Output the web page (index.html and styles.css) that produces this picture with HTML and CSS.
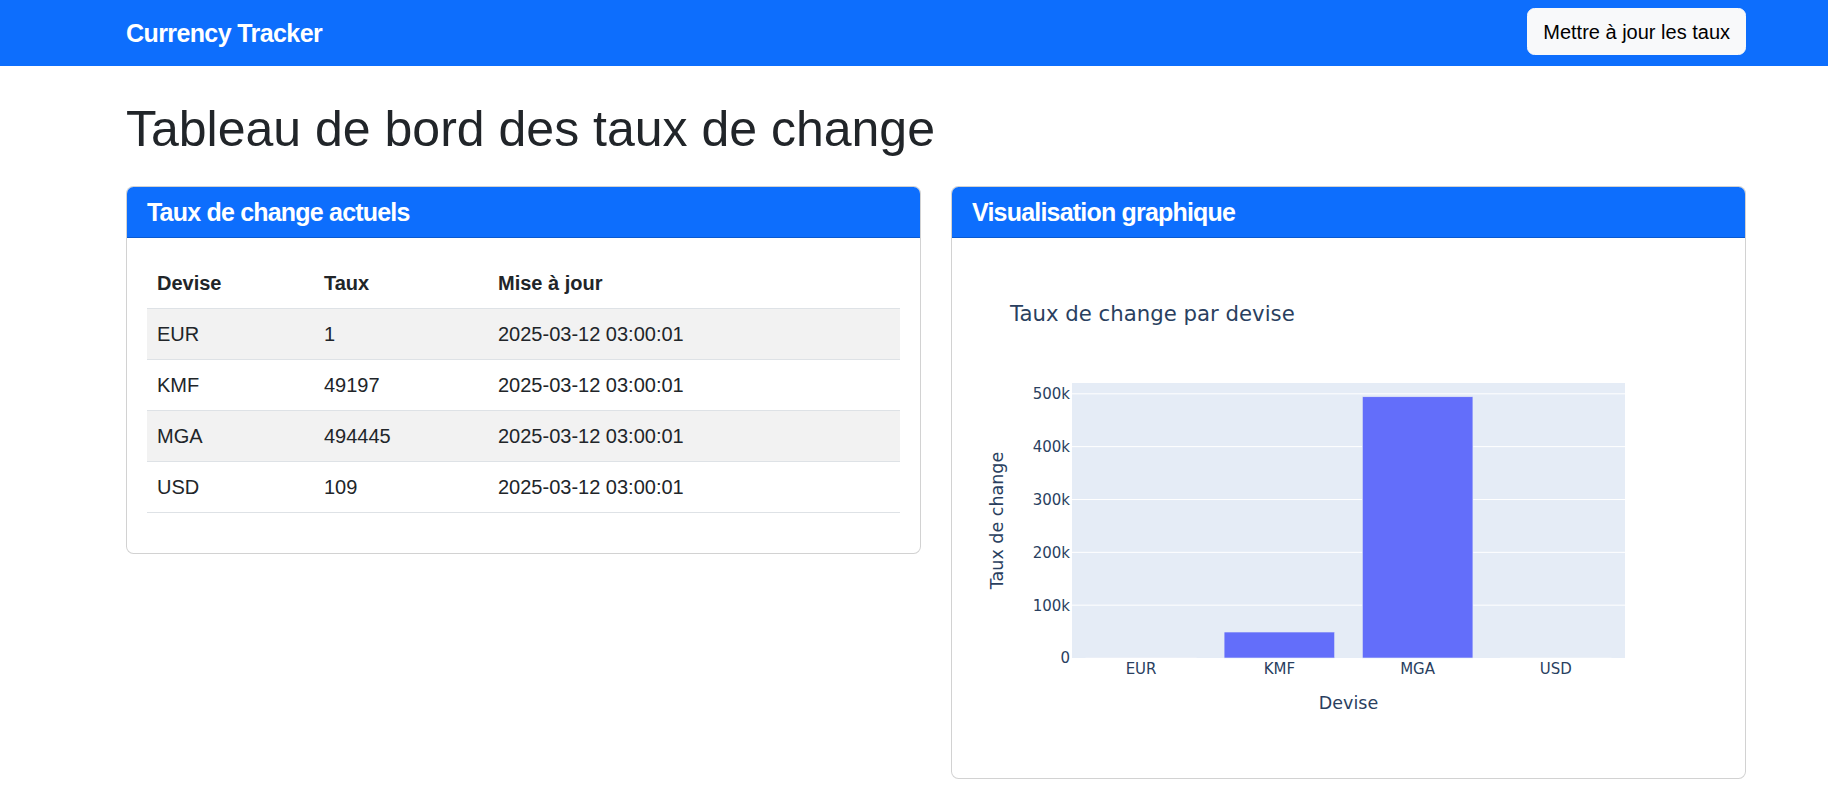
FILE: index.html
```html
<!DOCTYPE html>
<html lang="fr">
<head>
<meta charset="utf-8">
<title>Currency Tracker</title>
<link rel="stylesheet" href="styles.css">
</head>
<body>
<nav class="navbar">
  <div class="navbar-inner">
    <a class="brand" href="#">Currency Tracker</a>
    <button class="btn-light" type="button">Mettre à jour les taux</button>
  </div>
</nav>

<main class="container">
  <h1 class="page-title">Tableau de bord des taux de change</h1>

  <div class="cards">
    <section class="card">
      <h5 class="card-header">Taux de change actuels</h5>
      <div class="card-body">
        <table class="rates">
          <colgroup>
            <col class="col-devise">
            <col class="col-taux">
            <col>
          </colgroup>
          <thead>
            <tr><th>Devise</th><th>Taux</th><th>Mise à jour</th></tr>
          </thead>
          <tbody>
            <tr class="striped"><td>EUR</td><td>1</td><td>2025-03-12 03:00:01</td></tr>
            <tr><td>KMF</td><td>49197</td><td>2025-03-12 03:00:01</td></tr>
            <tr class="striped"><td>MGA</td><td>494445</td><td>2025-03-12 03:00:01</td></tr>
            <tr><td>USD</td><td>109</td><td>2025-03-12 03:00:01</td></tr>
          </tbody>
        </table>
      </div>
    </section>

    <section class="card">
      <h5 class="card-header">Visualisation graphique</h5>
      <div class="card-body">
        <svg class="chart" width="753" height="500" viewBox="0 0 753 500">
          <text class="chart-title" x="38" y="63">Taux de change par devise</text>
          <rect class="plot-bg" x="100" y="125" width="553" height="275"/>
          <g class="grid">
            <line x1="100" x2="653" y1="347.16" y2="347.16"/>
            <line x1="100" x2="653" y1="294.33" y2="294.33"/>
            <line x1="100" x2="653" y1="241.49" y2="241.49"/>
            <line x1="100" x2="653" y1="188.65" y2="188.65"/>
            <line x1="100" x2="653" y1="135.82" y2="135.82"/>
          </g>
          <g class="bars">
            <rect class="bar-tiny" x="113.83" y="399.5" width="110.6" height="0.01"/>
            <rect x="252.08" y="374.01" width="110.6" height="25.99"/>
            <rect x="390.33" y="138.75" width="110.6" height="261.25"/>
            <rect class="bar-tiny" x="528.58" y="399.5" width="110.6" height="0.06"/>
          </g>
          <g class="ytick">
            <text x="98" y="405">0</text>
            <text x="98" y="352.5">100k</text>
            <text x="98" y="299.6">200k</text>
            <text x="98" y="246.8">300k</text>
            <text x="98" y="194">400k</text>
            <text x="98" y="141.1">500k</text>
          </g>
          <g class="xtick">
            <text x="169.1" y="415.5">EUR</text>
            <text x="307.4" y="415.5">KMF</text>
            <text x="445.6" y="415.5">MGA</text>
            <text x="583.9" y="415.5">USD</text>
          </g>
          <text class="axis-title" x="376.5" y="450.5">Devise</text>
          <text class="axis-title" x="30.7" y="262.5" transform="rotate(-90 30.7 262.5)">Taux de change</text>
        </svg>
      </div>
    </section>
  </div>
</main>
</body>
</html>
```

FILE: styles.css
```css
* {
  box-sizing: border-box;
}

html,
body {
  margin: 0;
  padding: 0;
}

body {
  font-family: "Liberation Sans", Arial, sans-serif;
  font-size: 20px;
  line-height: 1.5;
  color: #212529;
  background: #ffffff;
}

/* Navbar */
.navbar {
  background: #0d6efd;
  height: 66px;
}

.navbar-inner {
  margin-left: 126px;
  width: 1620px;
  height: 100%;
  padding-bottom: 3px;
  display: flex;
  align-items: center;
  justify-content: space-between;
}

.brand {
  margin-top: 3px;
  color: #ffffff;
  text-decoration: none;
  font-size: 25px;
  font-weight: bold;
  line-height: 30px;
  letter-spacing: -0.6px;
}

.btn-light {
  height: 47px;
  padding: 0 15px;
  font-family: inherit;
  font-size: 20px;
  line-height: 30px;
  color: #000000;
  background: #f8f9fa;
  border: 1px solid #f8f9fa;
  border-radius: 7.5px;
  cursor: pointer;
}

/* Main */
.container {
  margin-left: 126px;
  width: 1620px;
  padding-top: 33px;
}

.page-title {
  margin: 0 0 27px;
  font-size: 50px;
  font-weight: normal;
  line-height: 60px;
  color: #212529;
}

.cards {
  display: grid;
  grid-template-columns: 1fr 1fr;
  gap: 30px;
  align-items: start;
}

.card {
  border: 1px solid rgba(0, 0, 0, 0.175);
  border-radius: 7.5px;
  background: #ffffff;
  overflow: hidden;
}

.card-header {
  margin: 0;
  padding: 10px 20px;
  background: #0d6efd;
  color: #ffffff;
  border-bottom: 1px solid rgba(0, 0, 0, 0.175);
  font-size: 25px;
  font-weight: bold;
  line-height: 30px;
  letter-spacing: -0.8px;
}

.card-body {
  padding: 20px;
}

/* Table */
.rates {
  width: 100%;
  table-layout: fixed;
  border-collapse: collapse;
  margin-bottom: 20px;
}

.col-devise {
  width: 167px;
}

.col-taux {
  width: 174px;
}

.rates th,
.rates td {
  padding: 10px;
  text-align: left;
  line-height: 30px;
  border-bottom: 1px solid #dee2e6;
  color: #212529;
}

.rates th {
  font-weight: bold;
}

.rates td {
  font-weight: normal;
}

.rates tr.striped td {
  background: #f2f2f2;
}

/* Chart */
.chart {
  display: block;
  font-family: "DejaVu Sans", Verdana, sans-serif;
}

.chart text {
  fill: #2a3f5f;
}

.chart-title {
  font-size: 21.25px;
}

.plot-bg {
  fill: #e5ecf6;
}

.grid line {
  stroke: #ffffff;
  stroke-width: 1;
}

.bars rect {
  fill: #636efa;
  stroke: #e5ecf6;
  stroke-width: 0.6;
}

.bars .bar-tiny {
  fill: #eef2f9;
  stroke: #eef2f9;
}

.ytick text {
  font-size: 15px;
  text-anchor: end;
}

.xtick text {
  font-size: 15px;
  text-anchor: middle;
}

.axis-title {
  font-size: 17.5px;
  text-anchor: middle;
}
```
